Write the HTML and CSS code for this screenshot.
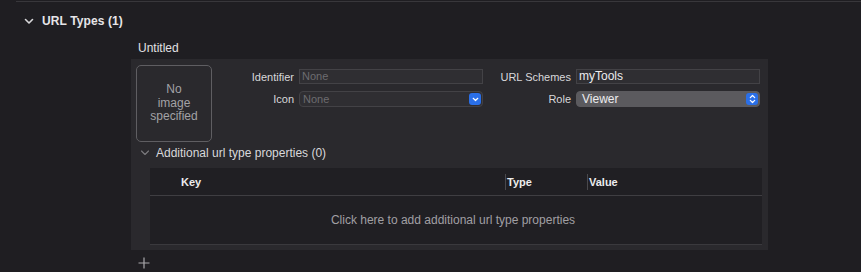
FILE: index.html
```html
<!DOCTYPE html>
<html>
<head>
<meta charset="utf-8">
<link rel="stylesheet" href="styles.css">
</head>
<body>
<div class="topline"></div>
<div class="section-header">
  <svg class="chev" width="10" height="7" viewBox="0 0 10 7"><path d="M1.5 1.5 L5 5 L8.5 1.5" fill="none" stroke="#d8d8da" stroke-width="1.6" stroke-linecap="round" stroke-linejoin="round"/></svg>
  <span class="section-title">URL Types (1)</span>
</div>
<div class="untitled">Untitled</div>
<div class="panel">
  <div class="form">
    <div class="imgbox">No<br>image<br>specified</div>
    <div class="label l1">Identifier</div>
    <div class="field f1"><span class="ph">None</span></div>
    <div class="label l2">URL Schemes</div>
    <div class="field f2"><span class="val big">myTools</span></div>
    <div class="label l3">Icon</div>
    <div class="popup f3"><span class="ph">None</span>
      <span class="bluebtn"><svg width="7" height="5" viewBox="0 0 7 5"><path d="M1.2 1.3 L3.5 3.5 L5.8 1.3" fill="none" stroke="#fff" stroke-width="1.2" stroke-linecap="round" stroke-linejoin="round"/></svg></span>
    </div>
    <div class="label l4">Role</div>
    <div class="popup role f4"><span class="val big">Viewer</span>
      <span class="bluebtn"><svg width="7" height="10" viewBox="0 0 7 10"><path d="M1.3 3.6 L3.5 1.5 L5.7 3.6 M1.3 6.4 L3.5 8.5 L5.7 6.4" fill="none" stroke="#fff" stroke-width="1.2" stroke-linecap="round" stroke-linejoin="round"/></svg></span>
    </div>
  </div>
  <div class="addl">
    <svg class="chev2" width="10" height="6" viewBox="0 0 10 6"><path d="M1.5 1 L5 4.5 L8.5 1" fill="none" stroke="#7b7a7e" stroke-width="1.1" stroke-linecap="round" stroke-linejoin="round"/></svg>
    <span>Additional url type properties (0)</span>
  </div>
  <div class="table">
    <div class="thead">
      <div class="th key">Key</div>
      <div class="th type">Type</div>
      <div class="th value">Value</div>
    </div>
    <div class="tbody">Click here to add additional url type properties</div>
  </div>
</div>
<div class="plus">
  <svg width="12" height="12" viewBox="0 0 12 12"><path d="M6 0.5 V11.5 M0.5 6 H11.5" stroke="#a9a8ac" stroke-width="1.2"/></svg>
</div>
</body>
</html>
```

FILE: styles.css
```css
html, body {
  margin: 0;
  padding: 0;
  background: #1f1e22;
  font-family: "Liberation Sans", Arial, sans-serif;
  color: #dedde0;
  width: 861px;
  height: 272px;
  overflow: hidden;
}

.topline {
  margin-left: 16px;
  margin-top: 1px;
  height: 1px;
  background: #38373b;
}

.section-header {
  display: flex;
  align-items: center;
  height: 16px;
  margin-top: 11px;
  padding-left: 24px;
}

.chev {
  margin-right: 8px;
}

.section-title {
  font-weight: bold;
  font-size: 12px;
  color: #e6e5e8;
  letter-spacing: 0.1px;
}

.untitled {
  margin-left: 138px;
  margin-top: 12px;
  font-size: 12px;
  height: 15px;
  line-height: 15px;
  color: #e2e1e4;
}

.panel {
  margin-left: 131px;
  margin-top: 3px;
  width: 637px;
  height: 191px;
  background: #2a292d;
  box-sizing: border-box;
  padding-top: 6px;
}

.form {
  display: grid;
  grid-template-columns: 76px 87px 184px 93px 184px;
  grid-template-rows: 16px 16px;
  row-gap: 6px;
  padding-left: 5px;
  padding-top: 4px;
  height: 80px;
  box-sizing: border-box;
}

.imgbox {
  grid-row: 1 / 3;
  grid-column: 1;
  margin-top: -4px;
  width: 76px;
  height: 77px;
  box-sizing: border-box;
  border: 1.5px solid #5f5e62;
  border-radius: 5px;
  display: flex;
  align-items: center;
  justify-content: center;
  text-align: center;
  font-size: 12px;
  line-height: 13.5px;
  color: #a3a2a6;
}

.label {
  font-size: 11px;
  text-align: right;
  padding-right: 5px;
  line-height: 16px;
  color: #d9d8db;
}

.l1 { grid-column: 2; grid-row: 1; }
.f1 { grid-column: 3; grid-row: 1; }
.l2 { grid-column: 4; grid-row: 1; }
.f2 { grid-column: 5; grid-row: 1; }
.l3 { grid-column: 2; grid-row: 2; }
.f3 { grid-column: 3; grid-row: 2; }
.l4 { grid-column: 4; grid-row: 2; }
.f4 { grid-column: 5; grid-row: 2; }

.field {
  height: 15px;
  box-sizing: border-box;
  border: 1px solid #434246;
  background: #2f2e32;
  font-size: 11px;
  line-height: 13px;
  padding-left: 2px;
}

.popup {
  height: 16px;
  box-sizing: border-box;
  border: 1px solid #434246;
  border-radius: 4px;
  background: #2f2e32;
  font-size: 11px;
  line-height: 14px;
  padding-left: 3px;
  display: flex;
  align-items: center;
  justify-content: space-between;
  padding-right: 1px;
}

.popup.role {
  background: #5b5a5e;
  border-color: #5b5a5e;
  padding-left: 5px;
}

.ph { color: #6d6c70; }
.val { color: #ececee; }
.big { font-size: 12px; }

.bluebtn {
  width: 12px;
  height: 12px;
  border-radius: 3px;
  background: #2a6fe8;
  display: flex;
  align-items: center;
  justify-content: center;
}

.addl {
  display: flex;
  align-items: center;
  height: 16px;
  padding-left: 9px;
  font-size: 12px;
  color: #d9d8db;
}

.chev2 {
  margin-right: 6px;
}

.table {
  margin-left: 19px;
  margin-top: 7px;
  width: 612px;
  height: 77px;
  background: #201f23;
  box-sizing: border-box;
  border-bottom: 1px solid #3a393d;
}

.thead {
  display: grid;
  grid-template-columns: 355px 82px 1fr;
  height: 28px;
  border-bottom: 1px solid #3f3e42;
  box-sizing: border-box;
  align-items: center;
}

.th {
  font-size: 11px;
  font-weight: bold;
  color: #ececee;
  height: 16px;
  line-height: 16px;
}

.th.key { padding-left: 31px; }
.th.type, .th.value {
  border-left: 1px solid #4a494d;
  padding-left: 1px;
}

.tbody {
  height: 48px;
  display: flex;
  align-items: center;
  justify-content: center;
  font-size: 12px;
  color: #a09fa3;
  padding-right: 6px;
}

.plus {
  margin-left: 138px;
  margin-top: 7px;
  width: 12px;
  height: 12px;
  display: flex;
}
```
